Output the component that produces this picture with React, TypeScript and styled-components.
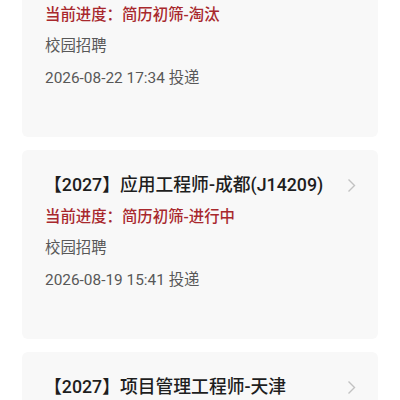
import React from 'react';
import styled, { createGlobalStyle } from 'styled-components';

const GlobalStyle = createGlobalStyle`
  html, body {
    margin: 0;
    padding: 0;
    background: #ffffff;
    font-family: Roboto, "Noto Sans CJK SC", "Noto Sans", sans-serif;
  }
`;

interface Application {
  id: string;
  title: string;
  progress: string;
  channel: string;
  time: string;
}

const applications: Application[] = [
  {
    id: 'j14188',
    title: '【2027】软件工程师-北京(J14188)',
    progress: '简历初筛-淘汰',
    channel: '校园招聘',
    time: '2026-08-22 17:34',
  },
  {
    id: 'j14209',
    title: '【2027】应用工程师-成都(J14209)',
    progress: '简历初筛-进行中',
    channel: '校园招聘',
    time: '2026-08-19 15:41',
  },
  {
    id: 'j14233',
    title: '【2027】项目管理工程师-天津',
    progress: '简历初筛-进行中',
    channel: '校园招聘',
    time: '2026-08-17 10:12',
  },
];

const Page = styled.div`
  width: 400px;
  height: 400px;
  overflow: hidden;
  background: #ffffff;
`;

// list is scrolled a little, so the first card's title sits above the fold
const List = styled.div`
  display: flex;
  flex-direction: column;
  gap: 13px;
  padding: 0 22px;
  margin-top: -52px;
`;

const Card = styled.div`
  background: #f8f8f8;
  border-radius: 6px;
  padding: 24px 22px 48px 23px;
  display: flex;
  flex-direction: column;
`;

const TitleRow = styled.div`
  display: flex;
  align-items: center;
  justify-content: space-between;
  height: 22px;
`;

const Title = styled.div`
  font-size: 17.8px;
  line-height: 22px;
  font-weight: 500;
  color: #1e1e1e;
  margin-left: -1px;
  white-space: nowrap;
`;

const Chevron = styled.svg`
  width: 9px;
  height: 15px;
  flex-shrink: 0;
`;

const Progress = styled.div`
  margin-top: 10px;
  font-size: 15.4px;
  line-height: 22px;
  font-weight: 500;
  color: #a8282d;
`;

const Meta = styled.div<{ $gap: number }>`
  margin-top: ${(p) => p.$gap}px;
  font-size: 15.4px;
  line-height: 22px;
  color: #585858;
`;

const ApplicationCard = ({ item }: { item: Application }) => (
  <Card>
    <TitleRow>
      <Title>{item.title}</Title>
      <Chevron viewBox="0 0 9 15">
        <path d="M1.5 1.5 L7.5 7.5 L1.5 13.5" fill="none" stroke="#c2c2c2" strokeWidth="1.4" />
      </Chevron>
    </TitleRow>
    <Progress>当前进度：{item.progress}</Progress>
    <Meta $gap={9}>{item.channel}</Meta>
    <Meta $gap={10}>{item.time} 投递</Meta>
  </Card>
);

export default function App() {
  return (
    <Page>
      <GlobalStyle />
      <List>
        {applications.map((item) => (
          <ApplicationCard key={item.id} item={item} />
        ))}
      </List>
    </Page>
  );
}
